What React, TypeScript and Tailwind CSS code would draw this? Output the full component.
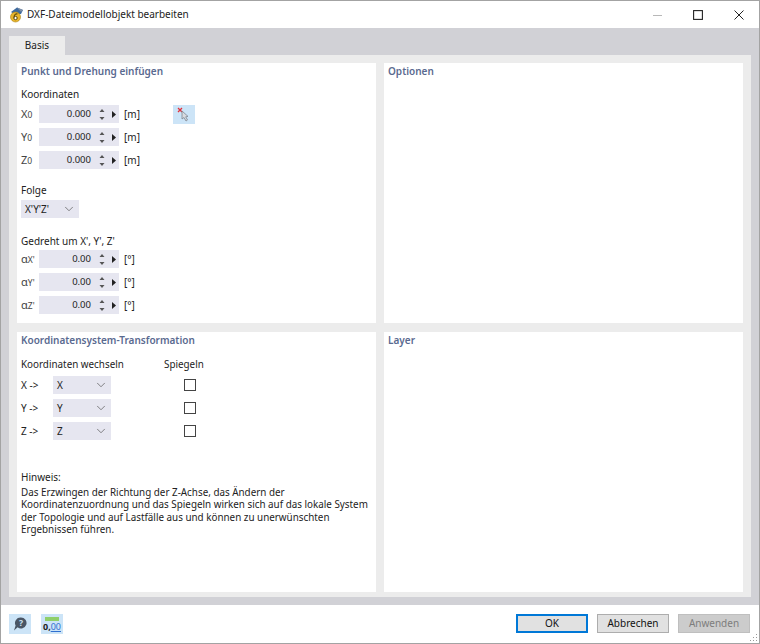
import React from "react";
import { ChevronDown } from "lucide-react";

function Sub({ base, sub }: { base: string; sub: string }) {
  return (
    <span className="w-[18px] shrink-0 text-[11px] text-[#444]">
      {base}
      <span className="text-[8.5px]">{sub}</span>
    </span>
  );
}

function Spin({ label, sub, value, unit }: { label: string; sub: string; value: string; unit: string }) {
  return (
    <div className="flex items-center h-[18px]">
      <Sub base={label} sub={sub} />
      <div className="w-[80px] h-[18px] bg-[#e6e6f0] flex items-center justify-end">
        <span className="text-[9.5px] text-[#222] mr-[8px]">{value}</span>
        <svg width="6" height="13" viewBox="0 0 6 13" className="mr-[7px]">
          <path d="M3 1 L5.5 4 H0.5 Z M0.5 9 H5.5 L3 12 Z" fill="#555" />
        </svg>
        <svg width="4" height="7" viewBox="0 0 4 7" className="mr-[3px]">
          <path d="M0 0 L4 3.5 L0 7 Z" fill="#222" />
        </svg>
      </div>
      <span className="ml-[5px] text-[10px] text-[#222]">{unit}</span>
    </div>
  );
}

function Select({ value, width }: { value: string; width: string }) {
  return (
    <div className={`${width} h-[18px] bg-[#e6e6f0] flex items-center justify-between pl-[4px] pr-[3px]`}>
      <span className="text-[10px] text-[#222]">{value}</span>
      <ChevronDown size={14} strokeWidth={1.2} className="text-[#555]" />
    </div>
  );
}

function Panel({ title, children }: { title: string; children?: React.ReactNode }) {
  return (
    <div className="bg-white h-[260px] px-[4px] pt-[1px]">
      <div className="text-[10px] font-semibold text-[#5a6a90] leading-[15px]">{title}</div>
      {children}
    </div>
  );
}

function MapRow({ from, to }: { from: string; to: string }) {
  return (
    <div className="flex items-center h-[18px]">
      <span className="w-[32px] text-[10px] text-[#222]">{from} -&gt;</span>
      <Select value={to} width="w-[58px]" />
      <div className="ml-[73px] w-[12px] h-[12px] border border-[#444] bg-white" />
    </div>
  );
}

function FooterButton({ label, kind }: { label: string; kind?: "default" | "disabled" }) {
  const cls =
    kind === "default"
      ? "border-2 border-[#0078d7] bg-[#e1e1e1] text-[#111]"
      : kind === "disabled"
      ? "border border-[#bfbfbf] bg-[#cccccc] text-[#7d7d7d]"
      : "border border-[#adadad] bg-[#e1e1e1] text-[#111]";
  return (
    <div className={`w-[72px] h-[19px] flex items-center justify-center text-[10px] ${cls}`}>{label}</div>
  );
}

export default function App() {
  return (
    <div
      className="w-[760px] h-[644px] flex flex-col bg-white border border-[#a3a3a3] overflow-hidden"
      style={{ fontFamily: '"Noto Sans", "Open Sans", sans-serif' }}
    >
      {/* title bar */}
      <div className="h-[27px] shrink-0 flex items-center pl-[7px] bg-white">
        <svg width="17" height="17" viewBox="0 0 17 17" className="shrink-0">
          <path d="M3 6 L9 1.5 L15 4 L13 8 L6 8 Z" fill="#3d6a9e" />
          <path d="M9 1.5 L15 4 L13 6 Z" fill="#7f8fa6" />
          <circle cx="7.5" cy="11" r="5" fill="#e8b52c" stroke="#a97f10" strokeWidth="0.6" />
          <circle cx="7.5" cy="12" r="1.7" fill="#fff" stroke="#5a4608" strokeWidth="1" />
          <path d="M6 11.5 C6 8.5 8 7.5 9.5 8" fill="none" stroke="#5a4608" strokeWidth="1.1" />
        </svg>
        <span className="ml-[2px] text-[10px] text-[#222]">DXF-Dateimodellobjekt bearbeiten</span>
        <div className="ml-auto flex items-center mr-[15px]">
          <svg width="9" height="10" viewBox="0 0 9 10" className="mr-[31px]">
            <path d="M0 5.5 H9" stroke="#b8b8b8" strokeWidth="1" />
          </svg>
          <svg width="10" height="10" viewBox="0 0 10 10" className="mr-[31px]">
            <rect x="0.6" y="0.6" width="8.8" height="8.8" fill="none" stroke="#222" strokeWidth="1.1" />
          </svg>
          <svg width="10" height="10" viewBox="0 0 10 10">
            <path d="M0.5 0.5 L9.5 9.5 M9.5 0.5 L0.5 9.5" stroke="#222" strokeWidth="1" />
          </svg>
        </div>
      </div>

      {/* body */}
      <div className="h-[577px] shrink-0 bg-[#d1d1d6] px-[8px] pt-[8px]">
        <div className="w-[56px] h-[19px] bg-[#ececec] flex items-center justify-center text-[10px] text-[#222]">
          Basis
        </div>
        <div className="h-[542px] bg-[#ececec] p-[8px]">
          <div className="grid grid-cols-[359px_359px] gap-x-[8px] gap-y-[9px]">
            <Panel title="Punkt und Drehung einfügen">
              <div className="mt-[8px] text-[10px] text-[#222] leading-[15px]">Koordinaten</div>
              <div className="mt-[3px] flex flex-col gap-[5px] relative">
                <Spin label="X" sub="0" value="0.000" unit="[m]" />
                <Spin label="Y" sub="0" value="0.000" unit="[m]" />
                <Spin label="Z" sub="0" value="0.000" unit="[m]" />
                <div className="absolute left-[152px] top-[0px] w-[22px] h-[19px] bg-[#cce4f7] flex items-center justify-center">
                  <svg width="14" height="15" viewBox="0 0 14 15">
                    <path d="M1 1 L5 5 M5 1 L1 5" stroke="#e0303a" strokeWidth="1.3" />
                    <path d="M5 4 L5 12 L7 10.5 L9 14 L10.5 13 L8.7 9.8 L11 9.4 Z" fill="#d8dbe0" stroke="#7f8790" strokeWidth="0.8" />
                  </svg>
                </div>
              </div>
              <div className="mt-[14px] text-[10px] text-[#222] leading-[15px]">Folge</div>
              <div className="mt-[2px]">
                <Select value="X'Y'Z'" width="w-[58px]" />
              </div>
              <div className="mt-[16px] text-[10px] text-[#222] leading-[15px]">Gedreht um X', Y', Z'</div>
              <div className="mt-[1px] flex flex-col gap-[5px]">
                <Spin label="α" sub="X'" value="0.00" unit="[°]" />
                <Spin label="α" sub="Y'" value="0.00" unit="[°]" />
                <Spin label="α" sub="Z'" value="0.00" unit="[°]" />
              </div>
            </Panel>
            <Panel title="Optionen" />
            <Panel title="Koordinatensystem-Transformation">
              <div className="mt-[9px] flex text-[9.85px] text-[#222] leading-[15px]">
                <span className="w-[143px]">Koordinaten wechseln</span>
                <span>Spiegeln</span>
              </div>
              <div className="mt-[4px] flex flex-col gap-[5px]">
                <MapRow from="X" to="X" />
                <MapRow from="Y" to="Y" />
                <MapRow from="Z" to="Z" />
              </div>
              <div className="mt-[30px] text-[10px] text-[#222] leading-[15px]">Hinweis:</div>
              <p className="mt-[1px] text-[9.85px] text-[#222] leading-[12.3px] whitespace-nowrap">
                Das Erzwingen der Richtung der Z-Achse, das Ändern der
                <br />
                Koordinatenzuordnung und das Spiegeln wirken sich auf das lokale System
                <br />
                der Topologie und auf Lastfälle aus und können zu unerwünschten
                <br />
                Ergebnissen führen.
              </p>
            </Panel>
            <Panel title="Layer" />
          </div>
        </div>
      </div>

      {/* footer */}
      <div className="flex-1 flex items-center pl-[8px] pr-[9px] relative">
        <div className="w-[22px] h-[20px] bg-[#cce4f7] flex items-center justify-center">
          <svg width="16" height="16" viewBox="0 0 16 16">
            <path d="M9 1.5 a5.5 5.5 0 1 1 -3.4 9.8 L2 14.5 L3.6 9.5 A5.5 5.5 0 0 1 9 1.5 Z" fill="#4a5666" />
            <text x="9" y="10" textAnchor="middle" fontSize="8.5" fontWeight="700" fill="#cce4f7">?</text>
          </svg>
        </div>
        <div className="ml-[10px] w-[22px] h-[20px] bg-[#cce4f7] flex flex-col items-center justify-center">
          <div className="w-[14px] h-[4px] bg-[#8fcf6a]" />
          <div className="text-[9px] leading-[11px] font-bold text-[#222]">
            0,<span className="text-[#2f6fd0] underline font-normal">00</span>
          </div>
        </div>
        <div className="ml-auto flex gap-[9px] mb-[1px]">
          <FooterButton label="OK" kind="default" />
          <FooterButton label="Abbrechen" />
          <FooterButton label="Anwenden" kind="disabled" />
        </div>
        {/* resize grip */}
        <svg width="8" height="8" viewBox="0 0 8 8" className="absolute right-[1px] bottom-[1px]">
          <path d="M6 0h1v1H6z M3 3h1v1H3z M6 3h1v1H6z M0 6h1v1H0z M3 6h1v1H3z M6 6h1v1H6z" fill="#9a9a9a" />
        </svg>
      </div>
    </div>
  );
}
